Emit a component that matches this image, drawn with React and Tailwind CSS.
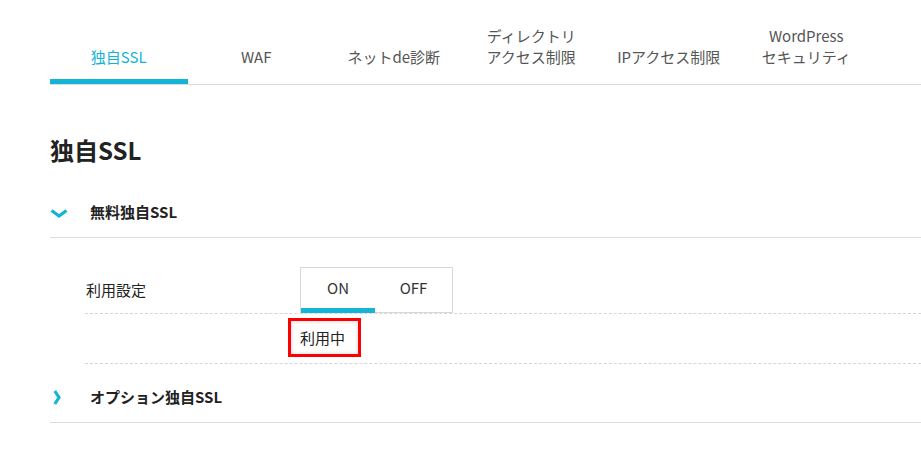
export default function App() {
  const tabs = [
    ["独自SSL"],
    ["WAF"],
    ["ネットde診断"],
    ["ディレクトリ", "アクセス制限"],
    ["IPアクセス制限"],
    ["WordPress", "セキュリティ"],
  ];
  const font = { fontFamily: '"Noto Sans CJK JP", "Noto Sans", sans-serif' };

  return (
    <div className="w-[921px] h-[475px] bg-white pl-[50px] overflow-hidden text-[#222]" style={font}>
      {/* tabs */}
      <div className="flex h-[85px] border-b border-[#dcdcdc] w-[871px]">
        {tabs.map((lines, i) => (
          <div key={i} className="w-[137.5px] flex flex-col justify-end items-center">
            <div
              className={`text-[15px] leading-[21px] text-center mb-[12px] ${
                i === 0 ? "text-[#14b4d6]" : "text-[#555]"
              }`}
            >
              {lines.map((l) => (
                <div key={l}>{l}</div>
              ))}
            </div>
            <div className={`w-full h-[5px] ${i === 0 ? "bg-[#14b4d6]" : ""}`} />
          </div>
        ))}
      </div>

      <h1 className="mt-[49px] text-[24px] leading-[32px] font-bold">独自SSL</h1>

      {/* accordion 1 */}
      <div className="mt-[22px] h-[50px] flex items-center border-b border-[#dcdcdc]">
        <div className="w-[40px]">
          <svg width="18" height="9" viewBox="0 0 18 9" className="mt-[2px]">
            <polyline points="1.5,1.5 9,7 16.5,1.5" fill="none" stroke="#14b4d6" strokeWidth="3.2" strokeLinejoin="miter" />
          </svg>
        </div>
        <span className="text-[15px] font-bold">無料独自SSL</span>
      </div>

      <div className="ml-[35px] pb-[9px]">
        <div className="flex items-center pt-[29px] border-b border-dashed border-[#d6d6d6]">
          <div className="w-[215px] pl-[1px] text-[15px]">利用設定</div>
          <div className="flex w-[153px] h-[46px] border border-[#d8d8d8] border-b-0">
            <div className="w-[74px] flex flex-col">
              <div className="flex-1 flex items-center justify-center text-[15px] text-[#333]">ON</div>
              <div className="h-[5px] bg-[#14b4d6]" />
            </div>
            <div className="flex-1 flex flex-col">
              <div className="flex-1 flex items-center justify-center text-[15px] text-[#333]">OFF</div>
              <div className="h-[5px] border-b border-[#d8d8d8]" />
            </div>
          </div>
        </div>
        <div className="pl-[203px] pt-[4px] pb-[6px] border-b border-dashed border-[#d6d6d6]">
          <span className="inline-block border-[3px] border-[#ff0000] pl-[9px] pr-[13px] py-[6px] text-[15px] leading-[21px] shadow-[inset_0_0_4px_rgba(0,0,0,0.18)]">
            利用中
          </span>
        </div>
      </div>

      {/* accordion 2 */}
      <div className="h-[50px] flex items-center border-b border-[#dcdcdc]">
        <div className="w-[40px] pl-[3px]">
          <svg width="8" height="15" viewBox="0 0 8 15">
            <polyline points="1.8,1 6,7.5 1.8,14" fill="none" stroke="#14b4d6" strokeWidth="3.2" />
          </svg>
        </div>
        <span className="text-[15px] font-bold">オプション独自SSL</span>
      </div>
    </div>
  );
}
